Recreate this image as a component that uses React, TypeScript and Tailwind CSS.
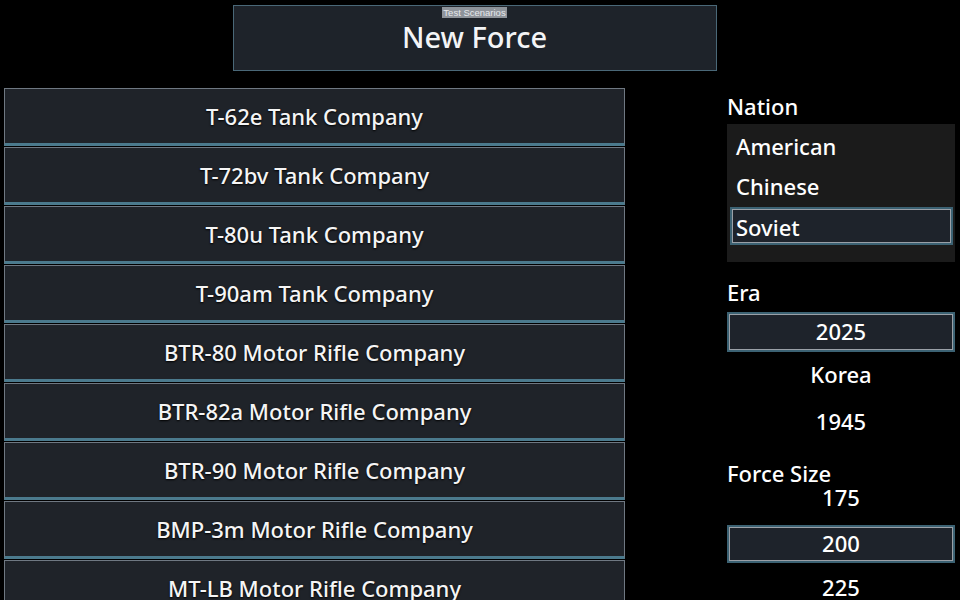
const units = [
  "T-62e Tank Company",
  "T-72bv Tank Company",
  "T-80u Tank Company",
  "T-90am Tank Company",
  "BTR-80 Motor Rifle Company",
  "BTR-82a Motor Rifle Company",
  "BTR-90 Motor Rifle Company",
  "BMP-3m Motor Rifle Company",
  "MT-LB Motor Rifle Company",
];

const nations = ["American", "Chinese", "Soviet"];

const font = { fontFamily: '"Noto Sans", "Open Sans", sans-serif' };

function SelectedBox({ children, center }: { children: React.ReactNode; center?: boolean }) {
  return (
    <div
      className={[
        "flex items-center border-2 border-[#3c6273] bg-[#1e232b] shadow-[inset_0_0_0_1px_#9aa0a7]",
        center ? "justify-center" : "pl-[4px]",
      ].join(" ")}
    >
      {children}
    </div>
  );
}

export default function App() {
  return (
    <div className="flex h-[600px] w-[960px] flex-col overflow-hidden bg-black font-medium text-white" style={font}>
      <div className="flex justify-center pt-[5px]">
        <div className="ml-[-11px] flex h-[66px] w-[484px] flex-col items-center border border-[#4a6878] bg-[#1e232a]">
          <span
            className="mt-px bg-[#8e939a] px-px text-[9.5px] font-normal leading-[11px] text-[#e5e7eb]"
            style={{ fontFamily: '"Liberation Sans", Arial, sans-serif' }}
          >
            Test Scenarios
          </span>
          <span className="mt-[1px] text-[29px] leading-[36px] text-[#f3f4f6]">New Force</span>
        </div>
      </div>

      <div className="mt-[17px] flex">
        <div className="ml-[4px] flex w-[621px] flex-col gap-px">
          {units.map((u) => (
            <div
              key={u}
              className="flex h-[58px] flex-none items-center justify-center border border-[#6f7882] border-b-[3px] border-b-[#4b7a8d] bg-[#1f2329] pt-[1px] text-[22px] text-[#f5f5f5] [text-shadow:0_1px_2px_#000]"
            >
              {u}
            </div>
          ))}
        </div>

        <div className="ml-[102px] flex w-[228px] flex-col text-[22px]">
          <div className="mt-[2px] h-[33px] leading-[33px]">Nation</div>
          <div className="mt-px flex h-[138px] flex-col bg-[#1b1b1b] pt-[2px] pr-[2px] pl-[3px]">
            {nations.map((n) =>
              n === "Soviet" ? (
                <div key={n} className="mt-px h-[38px]">
                  <SelectedBox>
                    <span className="h-[34px] pt-[1px] leading-[34px]">{n}</span>
                  </SelectedBox>
                </div>
              ) : (
                <div key={n} className="h-[40px] pl-[6px] leading-[40px]">
                  {n}
                </div>
              )
            )}
          </div>

          <div className="mt-[13px] h-[34px] leading-[34px]">Era</div>
          <div className="mt-[3px]">
            <SelectedBox center>
              <span className="h-[36px] leading-[34px]">2025</span>
            </SelectedBox>
          </div>
          <div className="h-[46px] text-center leading-[44px]">Korea</div>
          <div className="h-[46px] text-center leading-[46px]">1945</div>

          <div className="mt-[16px] h-[28px] leading-[26px]">Force Size</div>
          <div className="h-[24px] text-center leading-[18px]">175</div>
          <div className="mt-[13px]">
            <SelectedBox center>
              <span className="h-[34px] leading-[32px]">200</span>
            </SelectedBox>
          </div>
          <div className="h-[50px] text-center leading-[48px]">225</div>
        </div>
      </div>
    </div>
  );
}
